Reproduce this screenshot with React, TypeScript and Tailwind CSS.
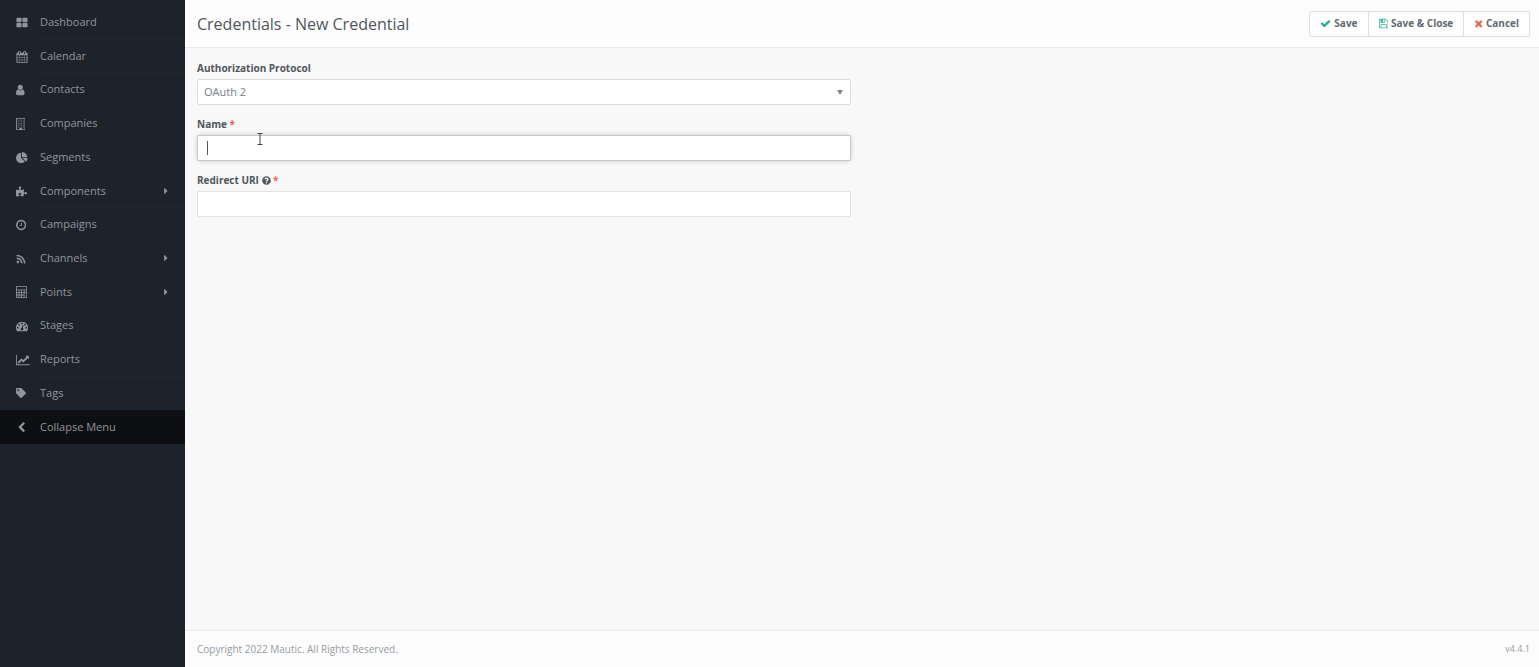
import { useState } from "react";
import type { ReactNode } from "react";
import { FaCaretRight, FaPuzzlePiece, FaQuestionCircle, FaRss, FaTag } from "react-icons/fa";

const paths = {
  thLarge:
    "M832 1024v384q0 52-38 90t-90 38h-512q-52 0-90-38t-38-90v-384q0-52 38-90t90-38h512q52 0 90 38t38 90zm0-768v384q0 52-38 90t-90 38h-512q-52 0-90-38t-38-90v-384q0-52 38-90t90-38h512q52 0 90 38t38 90zm896 768v384q0 52-38 90t-90 38h-512q-52 0-90-38t-38-90v-384q0-52 38-90t90-38h512q52 0 90 38t38 90zm0-768v384q0 52-38 90t-90 38h-512q-52 0-90-38t-38-90v-384q0-52 38-90t90-38h512q52 0 90 38t38 90z",
  calendar:
    "M192 1664h288v-288h-288v288zm352 0h320v-288h-320v288zm-352-352h288v-320h-288v320zm352 0h320v-320h-320v320zm-352-384h288v-288h-288v288zm736 736h320v-288h-320v288zm-384-736h320v-288h-320v288zm768 736h288v-288h-288v288zm-384-352h320v-320h-320v320zm-352-864v-288q0-13-9.5-22.5t-22.5-9.5h-64q-13 0-22.5 9.5t-9.5 22.5v288q0 13 9.5 22.5t22.5 9.5h64q13 0 22.5-9.5t9.5-22.5zm736 864h288v-320h-288v320zm-384-384h320v-288h-320v288zm384 0h288v-288h-288v288zm32-480v-288q0-13-9.5-22.5t-22.5-9.5h-64q-13 0-22.5 9.5t-9.5 22.5v288q0 13 9.5 22.5t22.5 9.5h64q13 0 22.5-9.5t9.5-22.5zm384-64v1280q0 52-38 90t-90 38h-1408q-52 0-90-38t-38-90v-1280q0-52 38-90t90-38h128v-96q0-66 47-113t113-47h64q66 0 113 47t47 113v96h384v-96q0-66 47-113t113-47h64q66 0 113 47t47 113v96h128q52 0 90 38t38 90z",
  user: "M1280 1399q0 109-62.5 187t-150.5 78h-854q-88 0-150.5-78t-62.5-187q0-85 8.5-160.5t31.5-152 58.5-131 94-89 134.5-34.5q131 128 313 128t313-128q76 0 134.5 34.5t94 89 58.5 131 31.5 152 8.5 160.5zm-256-887q0 159-112.5 271.5t-271.5 112.5-271.5-112.5-112.5-271.5 112.5-271.5 271.5-112.5 271.5 112.5 112.5 271.5z",
  building:
    "M64 0h1280q26 0 45 19t19 45v1664q0 26-19 45t-45 19h-1280q-26 0-45-19t-19-45v-1664q0-26 19-45t45-19zM128 128v1536h384v-256h384v256h384v-1536zM256 256h128v128h-128zM512 256h128v128h-128zM768 256h128v128h-128zM1024 256h128v128h-128zM256 512h128v128h-128zM512 512h128v128h-128zM768 512h128v128h-128zM1024 512h128v128h-128zM256 768h128v128h-128zM512 768h128v128h-128zM768 768h128v128h-128zM1024 768h128v128h-128zM256 1024h128v128h-128zM512 1024h128v128h-128zM768 1024h128v128h-128zM1024 1024h128v128h-128zM256 1280h128v128h-128zM1024 1280h128v128h-128z",
  pie: "M768 890l546 546q-106 108-247.5 168t-298.5 60q-209 0-385.5-103t-279.5-279.5-103-385.5 103-385.5 279.5-279.5 385.5-103v762zm187 6h773q0 157-60 298.5t-168 247.5zm709-128h-768v-768q209 0 385.5 103t279.5 279.5 103 385.5z",
  clock:
    "M896 544v448q0 14-9 23t-23 9h-320q-14 0-23-9t-9-23v-64q0-14 9-23t23-9h224v-352q0-14 9-23t23-9h64q14 0 23 9t9 23zm416 352q0-148-73-273t-198-198-273-73-273 73-198 198-73 273 73 273 198 198 273 73 273-73 198-198 73-273zm224 0q0 209-103 385.5t-279.5 279.5-385.5 103-385.5-103-279.5-279.5-103-385.5 103-385.5 279.5-279.5 385.5-103 385.5 103 279.5 279.5 103 385.5z",
  calculator:
    "M128 0h1408q53 0 90 38t38 90v1536q0 53-38 90t-90 38h-1408q-53 0-90-38t-38-90v-1536q0-53 38-90t90-38zM128 128v384h1408v-384zM128 640v256h256v-256zM512 640v256h256v-256zM896 640v256h256v-256zM1280 640v256h256v-256zM128 1024v256h256v-256zM512 1024v256h256v-256zM896 1024v256h256v-256zM128 1408v256h256v-256zM512 1408v256h256v-256zM896 1408v256h256v-256zM1280 1024v640h256v-640z",
  gauge:
    "M896 256a896 896 0 0 0-756 1377q19 31 55 31h1402q36 0 55-31a896 896 0 0 0-756-1377zM256 1024a128 128 0 1 0 0 256 128 128 0 1 0 0-256zM448 576a128 128 0 1 0 0 256 128 128 0 1 0 0-256zM896 384a128 128 0 1 0 0 256 128 128 0 1 0 0-256zM1344 576a128 128 0 1 0 0 256 128 128 0 1 0 0-256zM1536 1024a128 128 0 1 0 0 256 128 128 0 1 0 0-256zM1057 733q-24-6-46 7t-28 39l-101 382a192 192 0 1 0 124 31l101-381q6-26-7-48t-43-30z",
  chart:
    "M2048 1536v128h-2048v-1536h128v1408h1920zm-128-1248v435q0 21-19.5 29.5t-35.5-7.5l-121-121-633 633q-10 10-23 10t-23-10l-233-233-416 416-192-192 585-585q10-10 23-10t23 10l233 233 464-464-121-121q-16-16-7.5-35.5t29.5-19.5h435q14 0 23 9t9 23z",
  chevron:
    "M1427 301l-531 531 531 531q19 19 19 45t-19 45l-166 166q-19 19-45 19t-45-19l-742-742q-19-19-19-45t19-45l742-742q19-19 45-19t45 19l166 166q19 19 19 45t-19 45z",
  check:
    "M1671 566q0 40-28 68l-724 724-136 136q-28 28-68 28t-68-28l-136-136-362-362q-28-28-28-68t28-68l136-136q28-28 68-28t68 28l294 295 656-657q28-28 68-28t68 28l136 136q28 28 28 68z",
  times:
    "M1362 1322q0 40-28 68l-136 136q-28 28-68 28t-68-28l-294-294-294 294q-28 28-68 28t-68-28l-136-136q-28-28-28-68t28-68l294-294-294-294q-28-28-28-68t28-68l136-136q28-28 68-28t68 28l294 294 294-294q28-28 68-28t68 28l136 136q28 28 28 68t-28 68l-294 294 294 294q28 28 28 68z",
  floppy:
    "M384 1536h768v-384h-768v384zm896 0h128v-896q0-14-10-38.5t-20-34.5l-281-281q-10-10-34-20t-39-10v416q0 40-28 68t-68 28h-576q-40 0-68-28t-28-68v-416h-128v1280h128v-416q0-40 28-68t68-28h832q40 0 68 28t28 68v416zm-384-928v-320q0-13-9.5-22.5t-22.5-9.5h-192q-13 0-22.5 9.5t-9.5 22.5v320q0 13 9.5 22.5t22.5 9.5h192q13 0 22.5-9.5t9.5-22.5zm640 32v928q0 40-28 68t-68 28h-1344q-40 0-68-28t-28-68v-1344q0-40 28-68t68-28h928q40 0 88 20t76 48l280 280q28 28 48 76t20 88z",
};

function Icon({ name, width = 1792, className = "h-3" }: { name: keyof typeof paths; width?: number; className?: string }) {
  return (
    <svg viewBox={`0 0 ${width} 1792`} className={`${className} w-auto shrink-0`} fill="currentColor" fillRule="evenodd" aria-hidden="true">
      <path d={paths[name]} />
    </svg>
  );
}

type MenuItem = { label: string; icon: ReactNode; children?: boolean };

const menu: MenuItem[] = [
  { label: "Dashboard", icon: <Icon name="thLarge" width={1728} /> },
  { label: "Calendar", icon: <Icon name="calendar" /> },
  { label: "Contacts", icon: <Icon name="user" width={1280} /> },
  { label: "Companies", icon: <Icon name="building" width={1408} /> },
  { label: "Segments", icon: <Icon name="pie" /> },
  { label: "Components", icon: <FaPuzzlePiece className="size-[11px]" />, children: true },
  { label: "Campaigns", icon: <Icon name="clock" width={1536} /> },
  { label: "Channels", icon: <FaRss className="size-[10px]" />, children: true },
  { label: "Points", icon: <Icon name="calculator" width={1664} />, children: true },
  { label: "Stages", icon: <Icon name="gauge" /> },
  { label: "Reports", icon: <Icon name="chart" width={2048} /> },
  { label: "Tags", icon: <FaTag className="size-[10px]" /> },
];

function Sidebar() {
  return (
    <aside className="w-[185px] shrink-0 bg-[#1d232b] pt-[6px] text-[#92959a]">
      <nav className="grid h-[438px] auto-rows-fr text-[11px]">
        {menu.map((item) => (
          <a key={item.label} href="#" className="flex items-center pl-4">
            <span className="flex w-6 shrink-0 items-center">{item.icon}</span>
            <span className="flex h-full flex-1 items-center justify-between border-b border-[#20272e] pr-[14px]">
              {item.label}
              {item.children && <FaCaretRight className="size-[10px]" />}
            </span>
          </a>
        ))}
        <button type="button" className="flex items-center bg-[#0e0f13] pl-4 text-left">
          <span className="flex w-6 shrink-0 items-center">
            <Icon name="chevron" width={1536} className="h-[11px]" />
          </span>
          Collapse Menu
        </button>
      </nav>
    </aside>
  );
}

function Required() {
  return <span className="text-[#e8675c]"> *</span>;
}

export default function App() {
  const [protocol, setProtocol] = useState("oauth2");
  const [name, setName] = useState("");
  const [redirectUri, setRedirectUri] = useState("");

  return (
    <div className="flex min-h-screen bg-[#f8f8f8] font-['Open_Sans',sans-serif] text-[10px] text-[#50565d]">
      <Sidebar />

      <div className="flex min-w-0 flex-1 flex-col">
        <header className="flex h-12 items-center justify-between border-b border-[#ebebeb] bg-[#fdfdfd] pr-[9px] pl-3">
          <h1 className="text-base leading-6">Credentials - New Credential</h1>
          <div className="flex h-[26px] divide-x divide-[#dcdfe1] rounded-xs border border-[#dcdfe1] bg-white font-bold text-[#616971]">
            <button type="button" className="flex items-center gap-[3px] px-[10px]">
              <span className="text-[#23ae94]">
                <Icon name="check" className="h-[11px]" />
              </span>
              Save
            </button>
            <button type="button" className="flex items-center gap-[3px] px-[10px]">
              <span className="text-[#35b8a0]">
                <Icon name="floppy" width={1536} className="h-[11px]" />
              </span>
              Save &amp; Close
            </button>
            <button type="button" className="flex items-center gap-[3px] px-[10px]">
              <span className="text-[#e8694a]">
                <Icon name="times" width={1408} className="h-[11px]" />
              </span>
              Cancel
            </button>
          </div>
        </header>

        <main className="flex-1 px-3 pt-[11px]">
          <form className="w-1/2 space-y-[10px] pr-[11px]">
            <div>
              <label htmlFor="protocol" className="block h-5 leading-[18px] font-bold">
                Authorization Protocol
              </label>
              <div className="relative">
                <select
                  id="protocol"
                  value={protocol}
                  onChange={(e) => setProtocol(e.target.value)}
                  className="block h-[26px] w-full appearance-none rounded-xs border border-[#dcdcdc] bg-white px-[6px] text-[11px] text-[#777d84] outline-none"
                >
                  <option value="oauth2">OAuth 2</option>
                </select>
                <svg viewBox="0 0 6 6" className="pointer-events-none absolute top-[11px] right-2 size-[6px] fill-[#858585]">
                  <path d="M0 0h6L3 5z" />
                </svg>
              </div>
            </div>

            <div className="relative">
              <label htmlFor="name" className="block h-5 leading-[18px] font-bold">
                Name
                <Required />
              </label>
              <div className="relative">
                <input
                  id="name"
                  type="text"
                  value={name}
                  onChange={(e) => setName(e.target.value)}
                  className="block h-[26px] w-full rounded-xs border border-[#c8c8c8] bg-white px-[10px] shadow-[0_0_5px_rgba(0,0,0,0.18)] outline-none"
                />
                {!name && <span className="absolute top-[6px] left-[10px] h-[14px] w-px bg-[#555]" />}
              </div>
              {/* text cursor */}
              <svg viewBox="0 0 6 12" className="pointer-events-none absolute top-[18px] left-[60px] h-3 w-[6px] fill-none stroke-[#444]">
                <path d="M.5.5h5M3 .5v11M.5 11.5h5" />
              </svg>
            </div>

            <div>
              <label htmlFor="redirect-uri" className="block h-5 leading-[18px] font-bold">
                Redirect URI <FaQuestionCircle className="inline size-[9px] align-[-1px]" />
                <Required />
              </label>
              <input
                id="redirect-uri"
                type="text"
                value={redirectUri}
                onChange={(e) => setRedirectUri(e.target.value)}
                className="block h-[26px] w-full rounded-xs border border-[#e2e2e2] bg-white px-[10px] outline-none"
              />
            </div>
          </form>
        </main>

        <footer className="flex h-[37px] items-center justify-between border-t border-[#ebebeb] bg-[#fdfdfd] pr-[9px] pl-3 text-[#959ba3]">
          <span>Copyright 2022 Mautic. All Rights Reserved.</span>
          <span className="text-[9px]">v4.4.1</span>
        </footer>
      </div>
    </div>
  );
}
